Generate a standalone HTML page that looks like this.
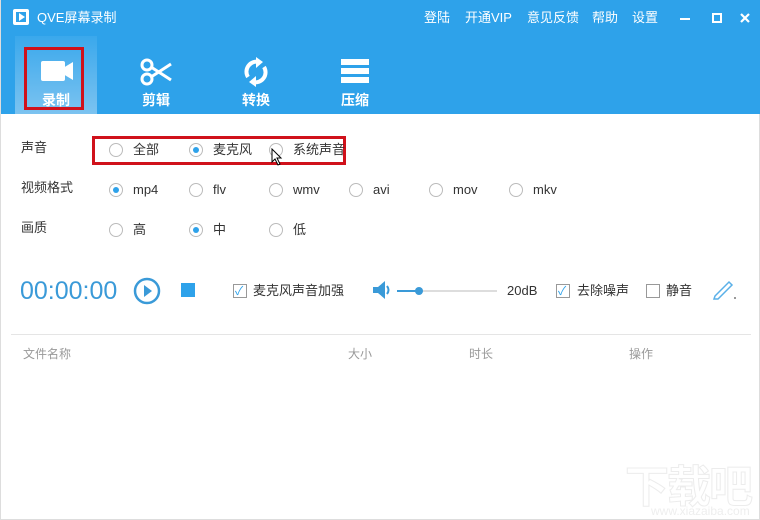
<!DOCTYPE html>
<html><head><meta charset="utf-8"><style>
*{margin:0;padding:0;box-sizing:border-box}
body{width:760px;height:520px;overflow:hidden;background:#fff;font-family:"Liberation Sans","Noto Sans CJK SC",sans-serif;position:relative;border-left:1px solid #ddd;border-right:1px solid #ddd;border-bottom:1px solid #ddd;line-height:1}
.a{position:absolute}
.hdr{left:0;top:0;width:760px;height:114px;background:#2ea2ea}
.t{color:#fff;font-size:13px}
.tab{top:36px;width:82px;height:78px}
.tabl{color:#fff;font-size:14px;font-weight:bold;width:82px;text-align:center}
.lbl{font-size:13px;color:#333}
.r{width:14px;height:14px;border:1px solid #bbb;border-radius:50%;background:#fff}
.r.on::after{content:"";position:absolute;left:3px;top:3px;width:6px;height:6px;border-radius:50%;background:#2ea2ea}
.cb{width:14px;height:14px;border:1px solid #999;background:#fff}
.g{font-size:12px;color:#999}
</style></head><body>
<div class="a hdr"></div>
<div class="a" style="left:12px;top:9px;width:16px;height:16px;border:2px solid #fff;border-radius:2px;background:#fff"></div>
<div class="a" style="left:15px;top:12px;width:10px;height:10px;background:#2ea2ea"></div>
<svg class="a" style="left:17px;top:13px" width="8" height="8"><path d="M1 0L7 4L1 8Z" fill="#fff"/></svg>
<div class="a t" style="left:36px;top:11px">QVE屏幕录制</div>
<div class="a t" style="left:423px;top:11px">登陆</div>
<div class="a t" style="left:464px;top:11px">开通VIP</div>
<div class="a t" style="left:526px;top:11px">意见反馈</div>
<div class="a t" style="left:591px;top:11px">帮助</div>
<div class="a t" style="left:631px;top:11px">设置</div>
<div class="a" style="left:679px;top:18px;width:10px;height:2px;background:#fff"></div>
<div class="a" style="left:711px;top:13px;width:10px;height:10px;border:2px solid #fff"></div>
<svg class="a" style="left:739px;top:13px" width="10" height="10"><path d="M1 1L9 9M9 1L1 9" stroke="#fff" stroke-width="2.2"/></svg>
<div class="a tab" style="left:14px;background:linear-gradient(#3aa8ec,#7cc3f0)"></div>
<div class="a" style="left:23px;top:47px;width:60px;height:63px;border:3px solid #d0111b"></div>
<div class="a" style="left:40px;top:61px;width:24px;height:20px;background:#fff;border-radius:2px"></div>
<svg class="a" style="left:62px;top:61px" width="10" height="20"><path d="M0 7L10 1V19L0 13Z" fill="#fff"/></svg>
<div class="a tabl" style="left:14px;top:93px">录制</div>
<svg class="a" style="left:138px;top:58px" width="34" height="28"><g fill="none" stroke="#fff" stroke-width="3"><circle cx="8" cy="7" r="5"/><circle cx="8" cy="21" r="5"/><path d="M12 9L32 22M12 19L32 6"/></g></svg>
<div class="a tabl" style="left:114px;top:93px">剪辑</div>
<svg class="a" style="left:240px;top:57px" width="30" height="30"><g fill="none" stroke="#fff" stroke-width="4"><path d="M7 20A10 10 0 0 1 18 5"/><path d="M23 10A10 10 0 0 1 12 25"/></g><path d="M15 0L22 5L15 11Z M15 19L8 25L15 30Z" fill="#fff"/></svg>
<div class="a tabl" style="left:214px;top:93px">转换</div>
<div class="a" style="left:340px;top:59px;width:28px;height:6px;background:#fff"></div>
<div class="a" style="left:340px;top:68px;width:28px;height:6px;background:#fff"></div>
<div class="a" style="left:340px;top:77px;width:28px;height:6px;background:#fff"></div>
<div class="a tabl" style="left:313px;top:93px">压缩</div>

<div class="a lbl" style="left:20px;top:141px">声音</div>
<div class="a lbl" style="left:20px;top:181px">视频格式</div>
<div class="a lbl" style="left:20px;top:221px">画质</div>
<div class="a" style="left:91px;top:136px;width:254px;height:29px;border:3px solid #d0111b"></div>
<div class="a r" style="left:108px;top:143px"></div><div class="a lbl" style="left:132px;top:143px">全部</div>
<div class="a r on" style="left:188px;top:143px"></div><div class="a lbl" style="left:212px;top:143px">麦克风</div>
<div class="a r" style="left:268px;top:143px"></div><div class="a lbl" style="left:292px;top:143px">系统声音</div>
<svg class="a" style="left:270px;top:148px" width="12" height="18"><path d="M1 1V14L4 11L7 17L9 16L6 10H10Z" fill="#fff" stroke="#000"/></svg>
<div class="a r on" style="left:108px;top:183px"></div><div class="a lbl" style="left:132px;top:183px">mp4</div>
<div class="a r" style="left:188px;top:183px"></div><div class="a lbl" style="left:212px;top:183px">flv</div>
<div class="a r" style="left:268px;top:183px"></div><div class="a lbl" style="left:292px;top:183px">wmv</div>
<div class="a r" style="left:348px;top:183px"></div><div class="a lbl" style="left:372px;top:183px">avi</div>
<div class="a r" style="left:428px;top:183px"></div><div class="a lbl" style="left:452px;top:183px">mov</div>
<div class="a r" style="left:508px;top:183px"></div><div class="a lbl" style="left:532px;top:183px">mkv</div>
<div class="a r" style="left:108px;top:223px"></div><div class="a lbl" style="left:132px;top:223px">高</div>
<div class="a r on" style="left:188px;top:223px"></div><div class="a lbl" style="left:212px;top:223px">中</div>
<div class="a r" style="left:268px;top:223px"></div><div class="a lbl" style="left:292px;top:223px">低</div>

<div class="a" style="left:19px;top:279px;font-size:25px;color:#3a9ad8">00:00:00</div>
<svg class="a" style="left:132px;top:277px" width="28" height="28"><circle cx="14" cy="14" r="12" fill="none" stroke="#3a9ad8" stroke-width="2.5"/><path d="M11 8L19 14L11 20Z" fill="#3a9ad8"/></svg>
<div class="a" style="left:180px;top:283px;width:14px;height:14px;background:#2ea2ea"></div>
<div class="a cb" style="left:232px;top:284px"></div><div class="a" style="left:234px;top:285px;color:#2ea2ea;font-size:12px">✓</div>
<div class="a lbl" style="left:252px;top:284px">麦克风声音加强</div>
<svg class="a" style="left:372px;top:281px" width="18" height="18"><path d="M0 6H5L12 0V18L5 12H0Z" fill="#3a9ad8"/><path d="M14 5Q17 9 14 13" stroke="#3a9ad8" stroke-width="2" fill="none"/></svg>
<div class="a" style="left:396px;top:290px;width:100px;height:2px;background:#ddd"></div>
<div class="a" style="left:396px;top:290px;width:22px;height:2px;background:#3a9ad8"></div>
<div class="a" style="left:414px;top:287px;width:8px;height:8px;border-radius:50%;background:#3a9ad8"></div>
<div class="a lbl" style="left:506px;top:284px">20dB</div>
<div class="a cb" style="left:555px;top:284px"></div><div class="a" style="left:557px;top:285px;color:#2ea2ea;font-size:12px">✓</div>
<div class="a lbl" style="left:576px;top:284px">去除噪声</div>
<div class="a cb" style="left:645px;top:284px"></div>
<div class="a lbl" style="left:665px;top:284px">静音</div>
<svg class="a" style="left:712px;top:278px" width="24" height="22"><path d="M2 18L16 4L19 7L5 21L1 21Z" fill="none" stroke="#5ab0e8" stroke-width="1.5"/><path d="M21 19h2v2h-2z" fill="#999"/></svg>

<div class="a" style="left:10px;top:334px;width:740px;height:1px;background:#e5e5e5"></div>
<div class="a g" style="left:22px;top:348px">文件名称</div>
<div class="a g" style="left:347px;top:348px">大小</div>
<div class="a g" style="left:468px;top:348px">时长</div>
<div class="a g" style="left:628px;top:348px">操作</div>
<div class="a" style="left:624px;top:466px;font-size:44px;font-weight:bold;color:#fff;-webkit-text-stroke:1px #ececec;letter-spacing:-2px">下载吧</div>
<div class="a" style="left:650px;top:505px;font-size:12px;color:#eee">www.xiazaiba.com</div>
</body></html>
